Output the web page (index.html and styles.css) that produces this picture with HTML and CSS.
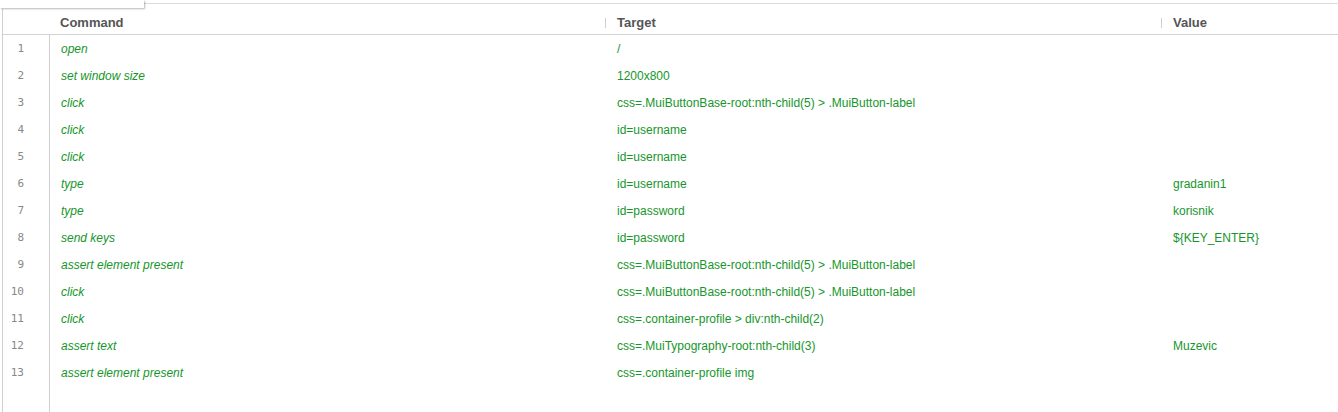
FILE: index.html
```html
<!DOCTYPE html>
<html>
<head>
<meta charset="utf-8">
<link rel="stylesheet" href="styles.css">
</head>
<body>
<div class="top">
  <div class="tab"></div>
  <div class="rule"></div>
</div>
<div class="table">
  <div class="hcell hnum"></div>
  <div class="hcell hcmd">Command</div>
  <div class="hcell hsep">Target</div>
  <div class="hcell hsep">Value</div>

  <div class="num">1</div><div class="cmd">open</div><div class="tgt">/</div><div class="val"></div>
  <div class="num">2</div><div class="cmd">set window size</div><div class="tgt">1200x800</div><div class="val"></div>
  <div class="num">3</div><div class="cmd">click</div><div class="tgt">css=.MuiButtonBase-root:nth-child(5) &gt; .MuiButton-label</div><div class="val"></div>
  <div class="num">4</div><div class="cmd">click</div><div class="tgt">id=username</div><div class="val"></div>
  <div class="num">5</div><div class="cmd">click</div><div class="tgt">id=username</div><div class="val"></div>
  <div class="num">6</div><div class="cmd">type</div><div class="tgt">id=username</div><div class="val">gradanin1</div>
  <div class="num">7</div><div class="cmd">type</div><div class="tgt">id=password</div><div class="val">korisnik</div>
  <div class="num">8</div><div class="cmd">send keys</div><div class="tgt">id=password</div><div class="val">${KEY_ENTER}</div>
  <div class="num">9</div><div class="cmd">assert element present</div><div class="tgt">css=.MuiButtonBase-root:nth-child(5) &gt; .MuiButton-label</div><div class="val"></div>
  <div class="num">10</div><div class="cmd">click</div><div class="tgt">css=.MuiButtonBase-root:nth-child(5) &gt; .MuiButton-label</div><div class="val"></div>
  <div class="num">11</div><div class="cmd">click</div><div class="tgt">css=.container-profile &gt; div:nth-child(2)</div><div class="val"></div>
  <div class="num">12</div><div class="cmd">assert text</div><div class="tgt">css=.MuiTypography-root:nth-child(3)</div><div class="val">Muzevic</div>
  <div class="num">13</div><div class="cmd">assert element present</div><div class="tgt">css=.container-profile img</div><div class="val"></div>

  <div class="num fill"></div>
</div>
</body>
</html>
```
FILE: styles.css
```css
html, body {
  margin: 0;
  padding: 0;
  background: #fff;
  height: 100%;
  overflow: hidden;
}

body {
  font-family: "Liberation Sans", Arial, sans-serif;
  font-size: 12px;
}

.top {
  display: flex;
  height: 9px;
}

.tab {
  width: 144px;
  height: 8px;
  background: #fff;
  box-shadow: 1px 1px 2px rgba(0, 0, 0, 0.28);
  position: relative;
  z-index: 1;
}

.rule {
  flex: 1;
  margin-top: 3px;
  height: 0;
  border-top: 1px solid #dcdcdc;
}

.table {
  margin-left: 2px;
  border-left: 1px solid #cfcfcf;
  height: calc(100% - 9px);
  display: grid;
  grid-template-columns: 47px 555px 556px 1fr;
  grid-template-rows: 26px repeat(13, 27px) 1fr;
}

.hcell {
  border-bottom: 1px solid #d3d3d3;
  font-size: 13px;
  font-weight: bold;
  color: #555;
  display: flex;
  align-items: center;
  padding-top: 1px;
}

.hcmd {
  padding-left: 10px;
}

.hsep {
  padding-left: 12px;
  position: relative;
}

.hsep::before {
  content: "";
  position: absolute;
  left: 0;
  top: 9px;
  height: 10px;
  border-left: 1px solid #cfcfcf;
}

.num {
  border-right: 1px solid #cfcfcf;
  font-family: "DejaVu Sans Mono", monospace;
  font-size: 11px;
  color: #888;
  display: flex;
  align-items: center;
  justify-content: flex-end;
  padding-right: 25px;
}

.fill {
  grid-column: 1;
}

.cmd, .tgt, .val {
  color: #16962b;
  display: flex;
  align-items: center;
  white-space: nowrap;
}

.cmd {
  font-style: italic;
  padding-left: 11px;
}

.tgt, .val {
  padding-left: 12px;
}
```
